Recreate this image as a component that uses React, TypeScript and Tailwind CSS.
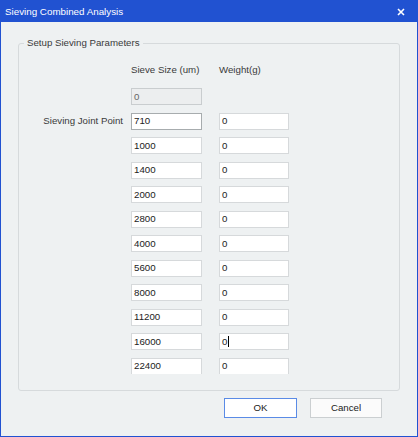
const rows = [
  { size: '710', weight: '0', label: 'Sieving Joint Point', focus: true },
  { size: '1000', weight: '0' },
  { size: '1400', weight: '0' },
  { size: '2000', weight: '0' },
  { size: '2800', weight: '0' },
  { size: '4000', weight: '0' },
  { size: '5600', weight: '0' },
  { size: '8000', weight: '0' },
  { size: '11200', weight: '0' },
  { size: '16000', weight: '0', caret: true },
  { size: '22400', weight: '0' },
]

function Field({
  value,
  width,
  focus,
  caret,
}: {
  value: string
  width: string
  focus?: boolean
  caret?: boolean
}) {
  return (
    <div
      className={`flex h-[17px] items-center bg-white pl-[2px] text-[#222] ${width} border ${
        focus ? 'border-[#a7acae]' : 'border-[#d6d9db]'
      }`}
    >
      <span>{value}</span>
      {caret && <span className="ml-[1px] h-[11px] w-px bg-black" />}
    </div>
  )
}

export default function App() {
  return (
    <div className="flex h-[437px] w-[418px] flex-col border border-[#2152d1] bg-[#eef1f2] font-['Liberation_Sans',Arial,sans-serif] text-[9.7px] leading-[12px] text-[#3a3a3a]">
      <div className="flex h-[21px] shrink-0 items-center justify-between bg-[#2152d1] pl-[4px] pr-[12px] text-[9.8px] text-white">
        <span>Sieving Combined Analysis</span>
        <svg width="8" height="8" viewBox="0 0 8 8">
          <path d="M1 1L7 7M7 1L1 7" stroke="white" strokeWidth="1.6" />
        </svg>
      </div>

      <fieldset className="ml-[17px] mt-[15px] h-[354px] w-[382px] rounded-[3px] border border-[#d6dadc]">
        <legend className="ml-[5px] px-[3px]">Setup Sieving Parameters</legend>

        <div className="mt-[15px] flex">
          <span className="ml-[112px] w-[88px]">Sieve Size (um)</span>
          <span>Weight(g)</span>
        </div>

        <div className="mt-[12px] flex h-[285.5px] flex-col gap-[7.5px] overflow-hidden">
          <div className="flex items-center">
            <div className="w-[104px]" />
            <div className="ml-[8px] flex h-[17px] w-[71px] items-center border border-[#c9cdcf] bg-[#eceeef] pl-[2px] text-[#666]">
              0
            </div>
          </div>
          {rows.map((r) => (
            <div key={r.size} className="flex shrink-0 items-center">
              <div className="w-[104px] text-right">{r.label}</div>
              <div className="ml-[8px]">
                <Field value={r.size} width="w-[71px]" focus={r.focus} />
              </div>
              <div className="ml-[17px]">
                <Field value={r.weight} width="w-[70px]" caret={r.caret} />
              </div>
            </div>
          ))}
        </div>
      </fieldset>

      <div className="mr-[35px] mt-[7px] flex justify-end gap-[13px]">
        <button className="h-[20px] w-[73px] border border-[#5a8be6] bg-white text-[#222]">
          OK
        </button>
        <button className="h-[20px] w-[72px] border border-[#cbcfd1] bg-[#fbfbfb] text-[#222]">
          Cancel
        </button>
      </div>
    </div>
  )
}
